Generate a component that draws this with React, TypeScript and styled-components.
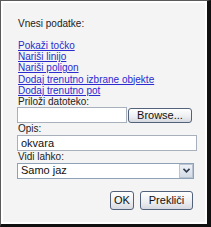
import React from "react";
import styled, { createGlobalStyle } from "styled-components";

const Global = createGlobalStyle`
  html, body { margin: 0; padding: 0; background: #ffffff; }
  body { font-family: "Liberation Sans", Arial, sans-serif; }
`;

const Frame = styled.div`
  box-sizing: border-box;
  width: 211px;
  height: 227px;
  border-top: 1px solid #5a5a5a;
  border-left: 1px solid #5a5a5a;
  border-right: 4px solid #111111;
  border-bottom: 3px solid #111111;
  background: #ffffff;
  padding: 2px;
`;

const Panel = styled.div`
  box-sizing: border-box;
  height: 100%;
  background: #f4f4f4;
  padding: 15px 10px 0 14px;
  font-size: 10px;
  line-height: 11.25px;
  color: #222222;
`;

const Title = styled.div`
  padding-left: 1px;
  margin-bottom: 10.6px;
`;

const LinkItem = styled.a`
  display: block;
  padding-left: 1px;
  color: #2b2bd0;
  text-decoration: underline;
  cursor: pointer;
`;

const Label = styled.div`
  padding-left: 1px;
`;

const FileRow = styled.div`
  display: flex;
  align-items: center;
  gap: 1px;
`;

const TextBox = styled.div<{ $w: number }>`
  box-sizing: border-box;
  width: ${(p) => p.$w}px;
  height: 16px;
  border: 1px solid #a8b1bb;
  background: #ffffff;
  font-size: 11px;
  line-height: 14px;
  padding-left: 3px;
  color: #111;
`;

const Btn = styled.button<{ $w: number }>`
  box-sizing: border-box;
  width: ${(p) => p.$w}px;
  height: 15px;
  border: 1px solid #53627a;
  border-radius: 3px;
  background: linear-gradient(#ffffff, #ecedf0 60%, #d6d9e0);
  font-family: "Liberation Sans", Arial, sans-serif;
  font-size: 11px;
  line-height: 13px;
  padding: 0;
  color: #111;
`;

const SelectBox = styled.div`
  box-sizing: border-box;
  width: 177px;
  height: 16px;
  margin-top: 1px;
  border: 1px solid #8da2b6;
  background: #ffffff;
  display: flex;
  align-items: center;
  font-size: 11px;
  color: #111;
`;

const SelectText = styled.span`
  flex: 1;
  padding-left: 3px;
`;

const Arrow = styled.div`
  box-sizing: border-box;
  width: 14px;
  height: 14px;
  border: 1px solid #b8c4d2;
  background: linear-gradient(#eef1f6, #d4dbe6);
  display: flex;
  align-items: center;
  justify-content: center;
`;

const Actions = styled.div`
  display: flex;
  justify-content: flex-end;
  gap: 6px;
  width: 176px;
  margin-top: 12px;
`;

const ActionBtn = styled(Btn)`
  height: 19px;
  font-size: 11px;
  line-height: 16px;
`;

export default function App() {
  return (
    <>
      <Global />
      <Frame>
        <Panel>
          <Title>Vnesi podatke:</Title>
          <LinkItem>Pokaži točko</LinkItem>
          <LinkItem>Nariši linijo</LinkItem>
          <LinkItem>Nariši poligon</LinkItem>
          <LinkItem>Dodaj trenutno izbrane objekte</LinkItem>
          <LinkItem>Dodaj trenutno pot</LinkItem>
          <Label>Priloži datoteko:</Label>
          <FileRow>
            <TextBox $w={110} />
            <Btn $w={64}>Browse...</Btn>
          </FileRow>
          <Label>Opis:</Label>
          <TextBox $w={180}>okvara</TextBox>
          <Label>Vidi lahko:</Label>
          <SelectBox>
            <SelectText>Samo jaz</SelectText>
            <Arrow>
              <svg width="7" height="5" viewBox="0 0 7 5">
                <path d="M0.5 0.8 L3.5 3.8 L6.5 0.8" stroke="#2c3a4e" strokeWidth="1.6" fill="none" />
              </svg>
            </Arrow>
          </SelectBox>
          <Actions>
            <ActionBtn $w={24}>OK</ActionBtn>
            <ActionBtn $w={53}>Prekliči</ActionBtn>
          </Actions>
        </Panel>
      </Frame>
    </>
  );
}
